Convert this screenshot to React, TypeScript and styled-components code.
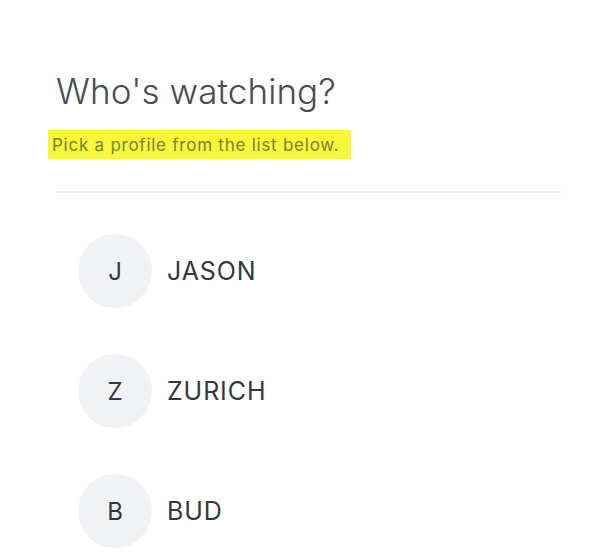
import React from 'react';
import styled, { createGlobalStyle } from 'styled-components';

const GlobalStyle = createGlobalStyle`
  html, body {
    margin: 0;
    padding: 0;
    background: #ffffff;
  }
  body {
    font-family: Inter, "Noto Sans", sans-serif;
  }
`;

const Page = styled.main`
  width: 600px;
  height: 558px;
  box-sizing: border-box;
  padding: 69px 38px 0 56px;
  overflow: hidden;
`;

const Title = styled.h1`
  margin: 0;
  font-size: 35px;
  line-height: 44px;
  font-weight: 300;
  color: #4a4b53;
  letter-spacing: 0.1px;
`;

const Hint = styled.p`
  display: inline-block;
  margin: 17px 0 0 -8px;
  padding: 0 12px 0 4px;
  height: 29px;
  line-height: 30px;
  font-size: 17px;
  letter-spacing: 0.75px;
  color: #76862a;
  background: #f9f73c;
`;

const Divider = styled.hr`
  margin: 32px 0 0;
  border: none;
  height: 2px;
  background: #eeeef0;
`;

const List = styled.ul`
  list-style: none;
  margin: 41px 0 0;
  padding: 0 0 0 22px;
  display: flex;
  flex-direction: column;
  gap: 46px;
`;

const Row = styled.li`
  display: flex;
  align-items: center;
  gap: 15px;
`;

const Avatar = styled.span`
  width: 74px;
  height: 74px;
  border-radius: 50%;
  background: #f1f2f5;
  display: flex;
  align-items: center;
  justify-content: center;
  font-size: 24px;
  color: #36373d;
`;

const Name = styled.span`
  font-size: 25px;
  letter-spacing: 0.9px;
  color: #36373d;
`;

const profiles = ['JASON', 'ZURICH', 'BUD'];

const App: React.FC = () => {
  return (
    <>
      <GlobalStyle />
      <Page>
        <Title>Who's watching?</Title>
        <Hint>Pick a profile from the list below.</Hint>
        <Divider />
        <List>
          {profiles.map((name) => (
            <Row key={name}>
              <Avatar>{name[0]}</Avatar>
              <Name>{name}</Name>
            </Row>
          ))}
        </List>
      </Page>
    </>
  );
};

export default App;
